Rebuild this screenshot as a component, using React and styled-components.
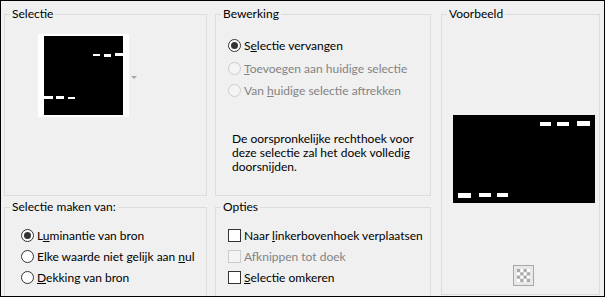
import React from "react";
import styled, { createGlobalStyle } from "styled-components";

const Global = createGlobalStyle`
  html, body { margin: 0; padding: 0; background: #f0f0f0; }
  body { font-family: Lato, "Noto Sans", sans-serif; font-size: 12px; color: #000; }
`;

const Frame = styled.div`
  width: 605px;
  height: 297px;
  box-sizing: border-box;
  border: 1px solid #000;
  background: #f0f0f0;
  overflow: hidden;
  padding: 5px 0 1px 3px;
  display: grid;
  grid-template-columns: 203px 216px 161px;
  grid-template-rows: 190px 1fr;
  column-gap: 8px;
  row-gap: 3px;
`;

const Group = styled.fieldset`
  margin: 0;
  margin-left: ${(p) => p.$shift || 0}px;
  padding: 0;
  min-width: 0;
  border: 1px solid #dcdcdc;
  border-bottom: ${(p) => (p.$open ? "none" : "1px solid #dcdcdc")};
  grid-row: ${(p) => (p.$span ? "1 / span 2" : "auto")};
  grid-column: ${(p) => p.$col || "auto"};
  display: flex;
  flex-direction: column;
  box-sizing: border-box;
  height: ${(p) => (p.$open ? "calc(100% + 8px)" : "100%")};
`;

const Legend = styled.legend`
  margin-left: 5px;
  padding: 0 2px;
  height: 16px;
  line-height: 16px;
  font-size: 12px;
  color: #000;
`;

const ThumbRow = styled.div`
  display: flex;
  align-items: center;
  padding: 12px 0 0 33px;
`;

const Thumb = styled.div`
  width: 91px;
  height: 83px;
  box-sizing: border-box;
  background: #fff;
  padding: 2px 6px;
`;

const Arrow = styled.div`
  width: 0;
  height: 0;
  margin-left: 2px;
  margin-top: 4px;
  border-left: 3px solid transparent;
  border-right: 3px solid transparent;
  border-top: 3px solid #a6a6a6;
`;

const List = styled.div`
  display: flex;
  flex-direction: column;
  padding: ${(p) => p.$pt}px 0 0 ${(p) => p.$pl}px;
`;

const Row = styled.label`
  display: flex;
  align-items: center;
  height: ${(p) => p.$h}px;
  gap: 3px;
  color: ${(p) => (p.$disabled ? "#838383" : "#000")};
  white-space: nowrap;
`;

const Radio = styled.span`
  width: 13px;
  height: 13px;
  box-sizing: border-box;
  border-radius: 50%;
  border: 1px solid ${(p) => (p.$disabled ? "#cccccc" : "#333333")};
  background: ${(p) => (p.$disabled ? "#f4f4f4" : "#fff")};
  display: flex;
  align-items: center;
  justify-content: center;
  flex: none;
  &::after {
    content: "";
    display: ${(p) => (p.$checked ? "block" : "none")};
    width: 7px;
    height: 7px;
    border-radius: 50%;
    background: #333;
  }
`;

const Check = styled.span`
  width: 13px;
  height: 13px;
  box-sizing: border-box;
  border: 1px solid ${(p) => (p.$disabled ? "#cccccc" : "#333333")};
  background: ${(p) => (p.$disabled ? "#f4f4f4" : "#fff")};
  flex: none;
`;

const Note = styled.p`
  margin: 31px 0 0 16px;
  line-height: 14px;
  font-size: 12px;
  color: #000;
`;

const PreviewBox = styled.div`
  margin: 93px 0 0 11px;
  width: 142px;
  height: 88px;
  background: #000;
`;

const Checker = styled.div`
  margin: 62px 0 0 71px;
  width: 21px;
  height: 21px;
  box-sizing: border-box;
  border: 1px solid #a9a9a9;
  padding: 3px;
  background: #e8e8e8;
`;

const Key = styled.span`
  text-decoration: underline;
`;

function ThumbArt() {
  return (
    <svg width="79" height="79" viewBox="0 0 79 79" style={{ display: "block" }}>
      <rect width="79" height="79" fill="#000" />
      <g fill="#fff">
        <rect x="49" y="18" width="7" height="2" />
        <rect x="60" y="18" width="7" height="3" />
        <rect x="71" y="17" width="8" height="3" />
        <rect x="0" y="60" width="9" height="3" />
        <rect x="12" y="60" width="8" height="3" />
        <rect x="24" y="61" width="7" height="2" />
      </g>
    </svg>
  );
}

function PreviewArt() {
  return (
    <svg width="142" height="88" viewBox="0 0 142 88" style={{ display: "block" }}>
      <rect width="142" height="88" fill="#000" />
      <g fill="#fff">
        <rect x="87" y="7" width="11" height="4" />
        <rect x="104" y="7" width="12" height="4" />
        <rect x="124" y="6" width="13" height="5" />
        <rect x="5" y="78" width="13" height="5" />
        <rect x="26" y="78" width="12" height="4" />
        <rect x="44" y="78" width="11" height="4" />
      </g>
    </svg>
  );
}

function CheckerArt() {
  const cells = [];
  for (let r = 0; r < 4; r++)
    for (let c = 0; c < 4; c++)
      if ((r + c) % 2 === 0)
        cells.push(<rect key={`${r}-${c}`} x={c * 3} y={r * 3} width="3" height="3" fill="#a9a9a9" />);
  return (
    <svg width="13" height="13" viewBox="0 0 12 12" style={{ display: "block" }}>
      <rect width="12" height="12" fill="#fff" />
      {cells}
    </svg>
  );
}

export default function App() {
  return (
    <>
      <Global />
      <Frame>
        <Group $col="1">
          <Legend>Selectie</Legend>
          <ThumbRow>
            <Thumb>
              <ThumbArt />
            </Thumb>
            <Arrow />
          </ThumbRow>
        </Group>

        <Group $col="2">
          <Legend>Bewerking</Legend>
          <List $pt={12} $pl={12}>
            <Row $h={23}>
              <Radio $checked />
              <span>S<Key>e</Key>lectie vervangen</span>
            </Row>
            <Row $h={22} $disabled>
              <Radio $disabled />
              <span><Key>T</Key>oevoegen aan huidige selectie</span>
            </Row>
            <Row $h={22} $disabled>
              <Radio $disabled />
              <span>Van <Key>h</Key>uidige selectie aftrekken</span>
            </Row>
          </List>
          <Note>
            De oorspronkelijke rechthoek voor
            <br />
            deze selectie zal het doek volledig
            <br />
            doorsnijden.
          </Note>
        </Group>

        <Group $col="3" $span $shift={2}>
          <Legend>Voorbeeld</Legend>
          <PreviewBox>
            <PreviewArt />
          </PreviewBox>
          <Checker>
            <CheckerArt />
          </Checker>
        </Group>

        <Group $col="1" $open>
          <Legend>Selectie maken van:</Legend>
          <List $pt={9} $pl={16}>
            <Row $h={22}>
              <Radio $checked />
              <span>L<Key>u</Key>minantie van bron</span>
            </Row>
            <Row $h={21}>
              <Radio />
              <span>Elke waarde niet gelijk aan <Key>n</Key>ul</span>
            </Row>
            <Row $h={21}>
              <Radio />
              <span><Key>D</Key>ekking van bron</span>
            </Row>
          </List>
        </Group>

        <Group $col="2" $open>
          <Legend>Opties</Legend>
          <List $pt={9} $pl={12}>
            <Row $h={22}>
              <Check />
              <span>Naar <Key>l</Key>inkerbovenhoek verplaatsen</span>
            </Row>
            <Row $h={21} $disabled>
              <Check $disabled />
              <span>Af<Key>k</Key>nippen tot doek</span>
            </Row>
            <Row $h={21}>
              <Check />
              <span><Key>S</Key>electie omkeren</span>
            </Row>
          </List>
        </Group>
      </Frame>
    </>
  );
}
